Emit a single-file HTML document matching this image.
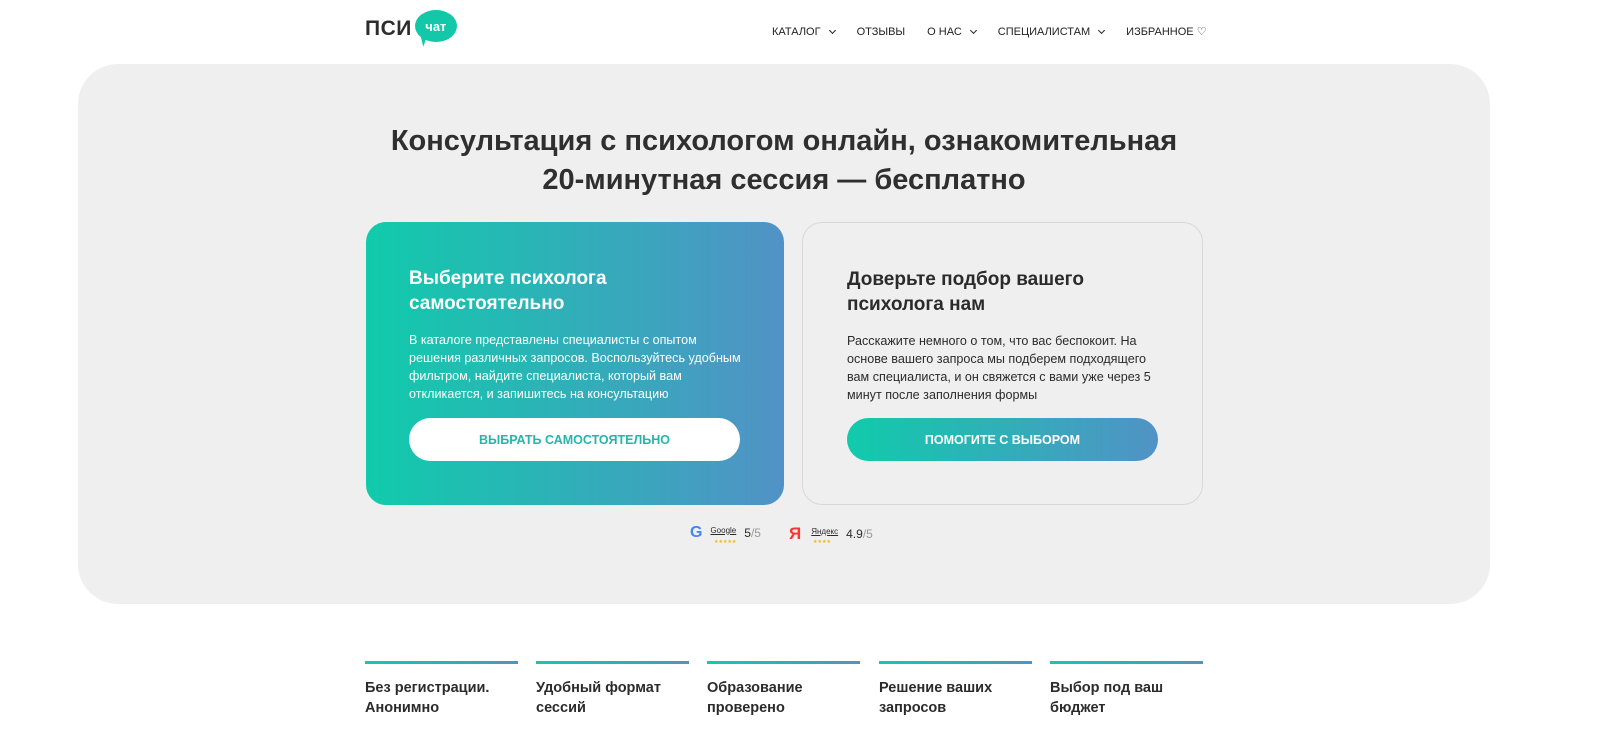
<!DOCTYPE html>
<html><head><meta charset="utf-8"><style>
*{box-sizing:border-box;margin:0;padding:0}
html{overflow:hidden;width:1600px}
body{width:1600px;height:732px;overflow:hidden;background:#fff;font-family:"Liberation Sans",sans-serif;color:#2b2b2b;position:relative}
.logo{position:absolute;left:365px;top:13px;display:flex;align-items:center}
.logo b{font-size:21px;font-weight:bold;color:#2d2d2d;letter-spacing:0.5px}
.bub{position:relative;margin-left:3px;width:42px;height:32px;border-radius:50%;background:#12c8a8;color:#fff;font-size:13px;font-weight:bold;display:flex;align-items:center;justify-content:center;top:-3px}
.bub:after{content:"";position:absolute;left:4px;bottom:-4px;border-top:9px solid #12c8a8;border-left:6px solid transparent;transform:rotate(20deg)}
.nav{position:absolute;top:25px;left:772px;display:flex;font-size:11px;color:#222}
.nav span{margin-right:22px;display:flex;align-items:center}
.chev{display:inline-block;width:5px;height:5px;border-right:1.5px solid #222;border-bottom:1.5px solid #222;transform:rotate(45deg);margin-left:9px;margin-top:-3px}
.hero{position:absolute;left:78px;top:64px;width:1412px;height:540px;background:#efefef;border-radius:40px}
h1{position:absolute;top:122px;left:0;width:1568px;text-align:center;font-size:29px;line-height:39px;font-weight:bold;color:#2f2f2f}
.card{position:absolute;top:222px;height:283px;border-radius:20px;padding:44px 43px}
.c1{left:366px;width:418px;background:linear-gradient(90deg,#10cbab,#5192c6);color:#fff}
.c2{left:802px;width:401px;border:1px solid #d8d8d8;padding-left:44px}
.card h2{font-size:19px;line-height:25px;font-weight:bold;margin-bottom:15px}
.card p{font-size:12.6px;line-height:18px}
.btn{position:absolute;height:43px;border-radius:22px;font-size:12.5px;font-weight:bold;display:flex;align-items:center;justify-content:center}
.b1{left:43px;top:196px;width:331px;background:#fff;color:#26b5ab}
.b2{left:44px;top:195px;width:311px;background:linear-gradient(90deg,#10cbab,#5192c6);color:#fff}
.rat{position:absolute;top:524px;font-size:11px;display:flex;align-items:center}
.rat small{font-size:8px;text-decoration:underline;margin-right:8px;position:relative;top:-3px}
.rat .st{position:absolute;left:24px;top:15px;font-size:5px;color:#f5b800;letter-spacing:0}
.feat{position:absolute;top:661px;width:153px;border-top:3px solid;border-image:linear-gradient(90deg,#10cbab,#5192c6) 1;padding-top:14px;font-size:14.5px;font-weight:bold;line-height:20px;color:#2b2b2b}
</style></head><body>
<div class="logo"><b>ПСИ</b><div class="bub">чат</div></div>
<div class="nav"><span>КАТАЛОГ<i class="chev"></i></span><span>ОТЗЫВЫ</span><span>О НАС<i class="chev"></i></span><span>СПЕЦИАЛИСТАМ<i class="chev"></i></span><span>ИЗБРАННОЕ ♡</span></div>
<div class="hero"></div>
<h1>Консультация с психологом онлайн, ознакомительная<br>20-минутная сессия — бесплатно</h1>
<div class="card c1"><h2>Выберите психолога<br>самостоятельно</h2><p>В каталоге представлены специалисты с опытом<br>решения различных запросов. Воспользуйтесь удобным<br>фильтром, найдите специалиста, который вам<br>откликается, и запишитесь на консультацию</p><div class="btn b1">ВЫБРАТЬ САМОСТОЯТЕЛЬНО</div></div>
<div class="card c2"><h2>Доверьте подбор вашего<br>психолога нам</h2><p>Расскажите немного о том, что вас беспокоит. На<br>основе вашего запроса мы подберем подходящего<br>вам специалиста, и он свяжется с вами уже через 5<br>минут после заполнения формы</p><div class="btn b2">ПОМОГИТЕ С ВЫБОРОМ</div></div>
<div class="rat" style="left:690px"><b style="color:#4285f4;font-size:16px;margin-right:8px">G</b><small>Google</small><span class="st">★★★★★</span><span style="font-size:12px">5<span style="color:#999">/5</span></span></div>
<div class="rat" style="left:789px"><b style="color:#f33;font-size:17px;margin-right:10px">Я</b><small>Яндекс</small><span class="st">★★★★</span><span style="font-size:12px">4.9<span style="color:#999">/5</span></span></div>
<div class="feat" style="left:365px">Без регистрации.<br>Анонимно</div>
<div class="feat" style="left:536px">Удобный формат<br>сессий</div>
<div class="feat" style="left:707px">Образование<br>проверено</div>
<div class="feat" style="left:879px">Решение ваших<br>запросов</div>
<div class="feat" style="left:1050px">Выбор под ваш<br>бюджет</div>
</body></html>
